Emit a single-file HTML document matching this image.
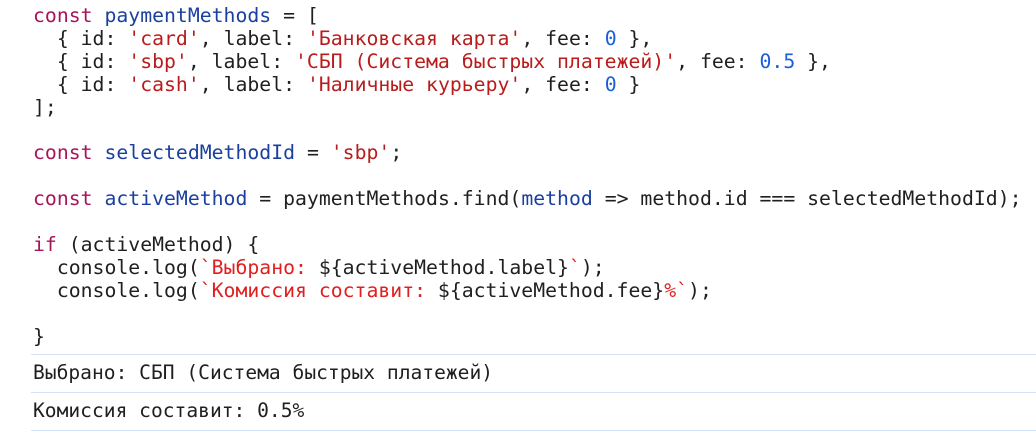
<!DOCTYPE html>
<html><head><meta charset="utf-8"><style>
html,body{margin:0;padding:0;background:#fff;width:1036px;height:436px;overflow:hidden}
body{font-family:"DejaVu Sans Mono","Liberation Mono",monospace;font-size:19.5px;color:#1f1f1f}
.code{position:absolute;left:33px;top:5px;white-space:pre;line-height:22.9px;font-size:19.8px}
.k{color:#a8145a}.v{color:#1a3f9e}.s{color:#b81c1c}.n{color:#1a5fd8}.t{color:#e02020}
.sep{position:absolute;left:31px;right:0;height:1px;background:#d3e2f8}
.out{position:absolute;left:33px;white-space:pre;line-height:22px;font-size:19.6px}
</style></head><body>
<div class="code"><span class="k">const</span> <span class="v">paymentMethods</span> = [
  { id: <span class="s">'card'</span>, label: <span class="s">'Банковская карта'</span>, fee: <span class="n">0</span> },
  { id: <span class="s">'sbp'</span>, label: <span class="s">'СБП (Система быстрых платежей)'</span>, fee: <span class="n">0.5</span> },
  { id: <span class="s">'cash'</span>, label: <span class="s">'Наличные курьеру'</span>, fee: <span class="n">0</span> }
];

<span class="k">const</span> <span class="v">selectedMethodId</span> = <span class="s">'sbp'</span>;

<span class="k">const</span> <span class="v">activeMethod</span> = paymentMethods.find(<span class="v">method</span> =&gt; method.id === selectedMethodId);

<span class="k">if</span> (activeMethod) {
  console.log(<span class="t">`Выбрано: </span>${activeMethod.label}<span class="t">`</span>);
  console.log(<span class="t">`Комиссия составит: </span>${activeMethod.fee}<span class="t">%`</span>);

}</div>
<div class="sep" style="top:354px"></div>
<div class="out" style="top:362px">Выбрано: СБП (Система быстрых платежей)</div>
<div class="sep" style="top:392px"></div>
<div class="out" style="top:400px">Комиссия составит: 0.5%</div>
<div class="sep" style="top:430px"></div>
</body></html>
